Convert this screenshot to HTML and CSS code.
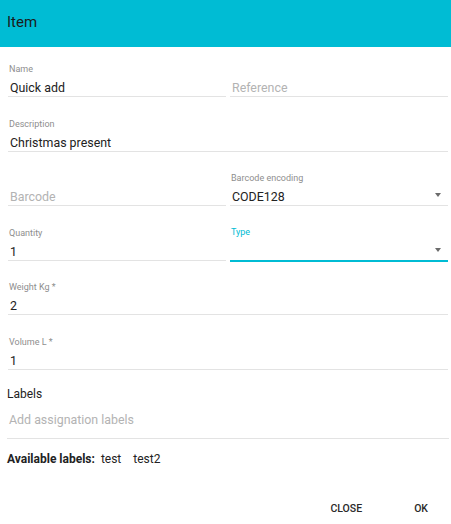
FILE: index.html
```html
<!DOCTYPE html>
<html>
<head>
<meta charset="utf-8">
<link rel="stylesheet" href="styles.css">
</head>
<body>
<div class="dialog">
  <header class="bar"><h1 class="title">Item</h1></header>
  <main class="form">
    <div class="row two">
      <div class="field">
        <div class="label">Name</div>
        <div class="input">Quick add</div>
      </div>
      <div class="field">
        <div class="label"></div>
        <div class="input ph">Reference</div>
      </div>
    </div>
    <div class="row">
      <div class="field">
        <div class="label">Description</div>
        <div class="input">Christmas present</div>
      </div>
    </div>
    <div class="row two">
      <div class="field">
        <div class="label"></div>
        <div class="input ph">Barcode</div>
      </div>
      <div class="field">
        <div class="label">Barcode encoding</div>
        <div class="input select">CODE128<span class="caret"></span></div>
      </div>
    </div>
    <div class="row two">
      <div class="field">
        <div class="label">Quantity</div>
        <div class="input">1</div>
      </div>
      <div class="field focused">
        <div class="label">Type</div>
        <div class="input select"><span class="caret"></span></div>
      </div>
    </div>
    <div class="row">
      <div class="field">
        <div class="label">Weight Kg *</div>
        <div class="input">2</div>
      </div>
    </div>
    <div class="row">
      <div class="field">
        <div class="label">Volume L *</div>
        <div class="input">1</div>
      </div>
    </div>
    <section class="labels">
      <div class="labels-title">Labels</div>
      <div class="labels-input">Add assignation labels</div>
      <div class="available"><b>Available labels:</b><span class="tag">test</span><span class="tag">test2</span></div>
    </section>
  </main>
  <footer class="actions">
    <button class="btn">CLOSE</button>
    <button class="btn">OK</button>
  </footer>
</div>
</body>
</html>
```
FILE: styles.css
```css
html, body {
  margin: 0;
  padding: 0;
  background: #fff;
}
body {
  font-family: Roboto, "Liberation Sans", sans-serif;
  color: #212121;
  width: 451px;
  height: 524px;
  overflow: hidden;
}
.bar {
  height: 47px;
  background: #00bcd4;
  display: flex;
  align-items: center;
  padding-left: 7px;
  box-sizing: border-box;
}
.title {
  margin: 0;
  font-size: 15px;
  font-weight: 400;
  color: #1b1b1b;
  line-height: 20px;
  padding-bottom: 4px;
}
.form {
  padding: 16px 3px 0 8px;
  display: flex;
  flex-direction: column;
  gap: 20.6px;
}
.row {
  display: grid;
  grid-template-columns: 1fr;
}
.row.two {
  grid-template-columns: 1fr 1fr;
  column-gap: 4px;
}
.field {
  display: flex;
  flex-direction: column;
  border-bottom: 1px solid #e3e3e3;
}
.label {
  height: 12px;
  line-height: 12px;
  font-size: 9px;
  color: #8e8e8e;
  padding-left: 1px;
}
.input {
  margin-top: 2px;
  height: 19px;
  line-height: 21px;
  font-size: 12.4px;
  color: #222;
  padding-left: 2px;
  position: relative;
}
.input.ph {
  color: #b3b3b3;
}
.select .caret {
  position: absolute;
  right: 7px;
  top: 7px;
  width: 0;
  height: 0;
  border-left: 3.5px solid transparent;
  border-right: 3.5px solid transparent;
  border-top: 4px solid #6b6b6b;
}
.focused {
  border-bottom: 2px solid #00bcd4;
  margin-bottom: -1px;
}
.focused .label {
  color: #00bcd4;
  margin-top: -1px;
  margin-bottom: 1px;
}
.labels {
  margin-top: -4px;
  margin-left: -1px;
  margin-right: -1px;
  display: flex;
  flex-direction: column;
}
.labels-title {
  font-size: 12px;
  line-height: 14px;
  color: #222;
}
.labels-input {
  margin-top: 9px;
  font-size: 12.4px;
  line-height: 20px;
  padding: 0 0 8px 2px;
  color: #b3b3b3;
  border-bottom: 1px solid #e3e3e3;
}
.available {
  margin-top: 13px;
  font-size: 12px;
  line-height: 14px;
  color: #222;
}
.available b {
  font-weight: 700;
  margin-right: 6px;
}
.tag {
  margin-right: 12px;
}
.actions {
  position: absolute;
  left: 0;
  right: 0;
  top: 499px;
  display: flex;
  justify-content: flex-end;
  gap: 24px;
  padding-right: 9px;
}
.btn {
  font-family: Roboto, "Liberation Sans", sans-serif;
  font-size: 10.5px;
  font-weight: 500;
  color: #2a2a2a;
  background: none;
  border: none;
  padding: 0 14px;
  height: 20px;
  line-height: 20px;
  cursor: pointer;
}
```
